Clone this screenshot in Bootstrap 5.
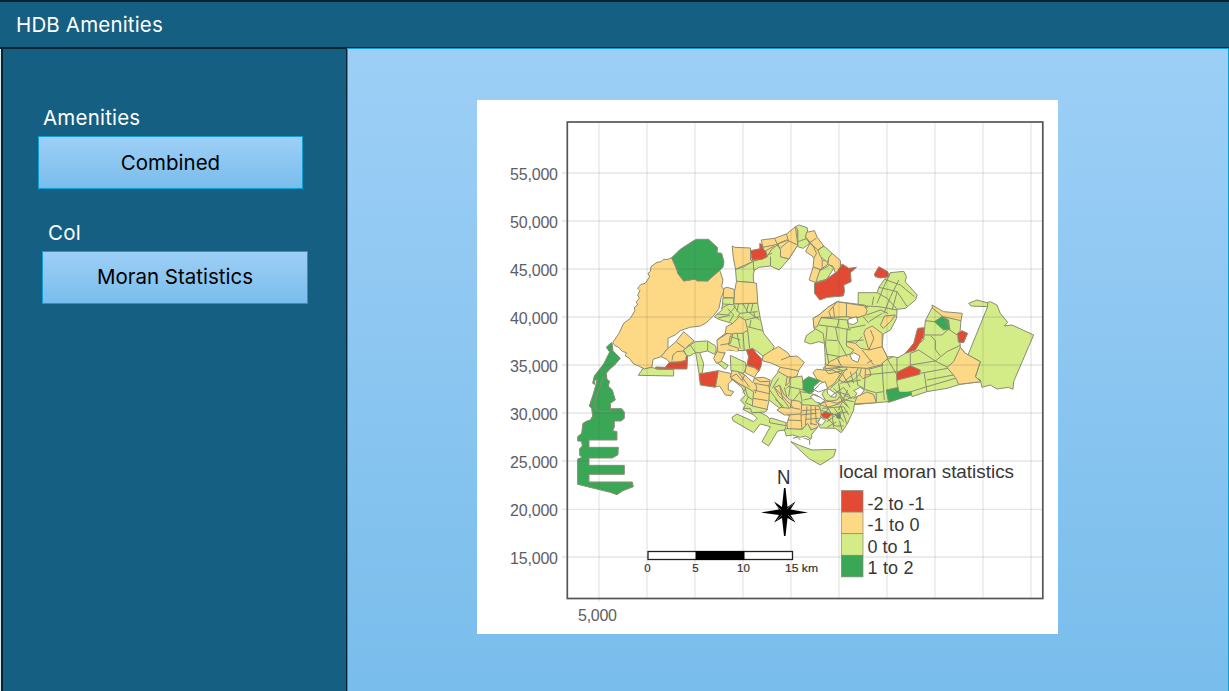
<!DOCTYPE html>
<html lang="en">
<head>
<meta charset="utf-8">
<meta name="viewport" content="width=device-width, initial-scale=1">
<title>HDB Amenities</title>
<link href="https://cdn.jsdelivr.net/npm/bootstrap@5.3.0/dist/css/bootstrap.min.css" rel="stylesheet">
<style>
body{font-family:Inter,"Liberation Sans",sans-serif;font-size:20.5px;letter-spacing:.08px;background:#156082}
.topbar{height:49px;background:#156082;border-top:2px solid #042433;border-bottom:2px solid #042433;padding:2px 0 0 16px}
.topbar span{letter-spacing:.16px}
.side{width:347px;background:#156082;border-left:1px solid #dfeaf0;border-right:1px solid #042433;padding:54px 0 0 37px;box-shadow:inset 2px 0 #042433}
.side label{line-height:30px;padding-left:5px;letter-spacing:.2px}
.pick{width:265px;height:53px;margin-top:3px;color:#000;border:1px solid #0f9ed5;border-radius:0;background:linear-gradient(#9dcff6,#79bdec);font-size:20.5px;padding:2px 0 0}
.pick:hover{color:#000}
.second{padding-left:4px;margin-top:29px}
.second label{padding-left:6px}
.second .pick{width:266px;padding:0}
.stage{border-top:1px solid #0f9ed5;border-left:1px solid #0f9ed5;border-right:1px solid #0f9ed5;margin-top:-1px;background:linear-gradient(#9dcff6,#79bdec);padding:51px 0 0 129px}
.plot{width:581px;height:534px;background:#fff;letter-spacing:0}
.plot svg{display:block;font-family:"Liberation Sans",Arial,sans-serif}
.zones path{stroke:#8c8c72;stroke-width:1;vector-effect:non-scaling-stroke;stroke-linejoin:round}
.r{fill:#e34a33}.o{fill:#fdd985}.l{fill:#d3ec87}.g{fill:#3aa757}.w{fill:#fff}.n{fill:none}
</style>
</head>
<body class="vh-100 overflow-hidden d-flex flex-column">
<header class="topbar d-flex align-items-center text-white flex-shrink-0"><span>HDB Amenities</span></header>
<div class="d-flex flex-grow-1">
<aside class="side text-white flex-shrink-0">
  <div>
    <label class="d-block">Amenities</label>
    <button class="btn pick d-block" type="button">Combined</button>
  </div>
  <div class="second">
    <label class="d-block">Col</label>
    <button class="btn pick d-block" type="button">Moran Statistics</button>
  </div>
</aside>
<main class="stage flex-grow-1">
<div class="plot">
<svg width="581" height="534" viewBox="477 100 581 534">
<g class="zones">
<!-- western islands -->
<g transform="translate(570.300 340) scale(.33333)">
<path class="g" d="M118 12L125 8 128 32 150 55 133 75 118 88 108 100 110 118 118 124 114 138 126 150 135 180 120 190 121 206 154 206 162 216 162 235 152 243 132 243 132 262 127 272 140 275 140 300 56 300 56 322 144 322 143 344 126 354 56 354 56 376 162 376 162 403 56 403 56 426 186 426 189 440 158 452 140 464 120 457 22 433 22 357 36 352 28 346 28 326 36 318 34 304 22 303 22 290 34 280 38 250 50 243 60 240 67 228 64 205 57 198 68 165 78 130 80 118 73 122 74 133 67 130 72 108 100 72 118 36 108 22Z"/>
<path class="n" d="M100 108L88 140 70 198 80 210 96 215 121 214 121 206"/>
</g>
<!-- north west -->
<g transform="translate(600.300 230) scale(.33333)">
<path class="l" d="M130 413L158 413 172 418 220 418 220 438 114 436 122 424Z"/>
<path class="o" d="M37 338L44 347 55 352 66 364 78 368 75 378 86 384 100 402 115 408 132 417 155 411 158 388 182 380 203 355 203 325 226 314 240 302 252 298 268 292 300 288 318 278 340 257 356 235 362 205 372 180 364 170 368 150 358 120 322 153 280 148 250 153 232 125 214 83 203 88 190 88 182 95 170 97 152 110 150 125 143 130 148 140 135 160 122 163 112 175 119 182 112 195 117 205 108 215 112 225 102 232 104 242 90 265 70 280 56 310Z"/>
<path class="g" d="M214 83L240 58 275 35 288 28 325 28 352 53 350 68 364 70 371 95 368 112 322 153 290 153 286 147 250 153 232 130 230 118Z"/>
<path class="o" d="M182 380L203 355 226 336 250 305 282 333 262 348 250 365 262 380 255 392 230 396 207 397 200 388Z"/>
<path class="r" d="M166 411L195 412 207 397 240 396 257 391 257 380 262 378 260 417 195 417 166 416Z"/>
<path class="n" d="M228 336L258 358M215 392L218 375 230 365 255 362"/>
<path class="l" d="M250 360L270 345 285 335 322 333 346 348 348 360 343 373 322 363 298 368 310 400 306 430 296 430 290 390 286 368 268 378 258 376Z"/>
<path class="n" d="M322 335V363M270 345L286 368 298 368"/>
</g>
<!-- north -->
<g transform="translate(700.500 220) scale(.33333)">
<path class="o" d="M95 78L103 82 150 84 150 120 158 124 105 148 98 110Z"/>
<path class="l" d="M105 148L130 140 158 124 164 142 158 165 160 188 108 184Z"/>
<path class="o" d="M108 184L160 188 168 190 172 250 135 250 100 252 102 215Z"/>
<path class="o" d="M70 205L80 202 101 208 101 234 68 232Z"/>
<path class="o" d="M182 60L222 55 258 42 285 20 292 28 292 75 265 117 240 112 215 110 195 112 188 84Z"/>
<path class="l" d="M158 124L198 112 212 90 230 75 240 88 240 110 265 117 236 150 210 138 175 142 160 152Z"/>
<path class="o" d="M232 72L258 60 292 75 265 117 240 110 240 88Z"/>
<path class="r" d="M150 92L178 86 178 70 185 75 188 88 196 93 200 110 185 118 155 121Z"/>
<path class="n" d="M186 82L222 75 258 62 M222 55L232 75M258 42L264 64 240 84M285 22L292 75M210 110V138M196 92L222 78M200 105L215 100"/>
<path class="l" d="M285 20L296 15 320 23 322 40 315 50 328 70 308 85 292 80 292 30Z"/>
<path class="o" d="M318 37L342 32 350 52 370 78 358 90 365 122 384 122 380 135 358 150 360 170 346 188 326 180 338 140 340 115 335 108 315 95 328 70 315 52Z"/>
<path class="l" d="M370 78L395 100 385 122 378 125 360 110 352 90Z"/>
<path class="o" d="M385 112L395 100 420 122 420 150 405 160 397 138 382 134Z"/>
<path class="l" d="M358 152L388 135 400 145 378 178 346 186Z"/>
<path class="n" d="M292 65L320 55M325 70L348 54M328 70L352 90 370 78M338 78L348 100 340 115M338 140L362 150M365 122L365 145M316 52L344 84"/>
</g>
<!-- west -->
<g transform="translate(700.300 330) scale(.33333)">
<path class="l" d="M68 -96L100 -96 100 -78 172 -80 180 -35 190 10 222 50 215 65 188 78 165 60 138 60 128 62 90 60 75 10 95 -20 55 -32 42 -40 65 -60Z"/>
<path class="o" d="M95 -18L118 -40 135 -30 142 0 128 10 100 10 90 18 85 45 115 55 112 66 85 60 72 68 50 95 42 85 52 60 50 30 75 10 78 -10Z"/>
<path class="w" d="M72 62L85 62 128 66 142 70 142 95 90 76Z" style="stroke:none"/>
<path class="n" d="M68 -78L100 -76 106 -70 82 -45 50 -48M82 -64L100 -45 88 -25M100 -72L118 -50 172 -55M115 -78L110 -55M128 -78L142 -55 178 -30M145 -79L138 -55M158 -79L152 -55M135 -30L178 -40M142 -10L188 2M142 0L148 55M160 -55L165 -35M110 10L120 55M128 8L132 60M92 20L120 30M50 30L82 10M75 10L98 12 90 40 60 45M54 -36L90 -45M62 -65L88 -78M120 -50L110 -38M148 -8L152 -30"/>
<path class="l" d="M72 68L62 92 84 106 75 118 50 98 48 92Z"/>
<path class="l" d="M90 76L135 97 138 112 130 130 92 122Z"/>
<path class="o" d="M188 78L215 60 235 50 262 68 270 80 290 78 312 97 296 120 290 138 272 145 235 132 232 124 240 112 215 100 186 92Z"/>
<path class="n" d="M242 90L272 78M240 112L295 122"/>
<path class="r" d="M138 60L158 55 168 70 185 88 182 110 175 125 162 112 140 105 145 80Z"/>
<path class="o" d="M50 65L74 70 62 95 48 100 40 85Z"/>
<path class="o" d="M138 106L164 114 175 122 162 142 134 128Z"/>
<path class="o" d="M53 122L90 130 98 148 84 162 84 180 100 185 92 197 75 195 58 168 45 170Z"/>
<path class="r" d="M-4 132L53 122 53 130 45 172 0 165Z"/>
<path class="l" d="M95 262L110 252 160 275 170 265 160 255 128 238 135 228 165 240 200 258 215 275 258 285 255 300 232 303 205 348 185 335 210 290 180 282 160 308 98 272Z"/>
<path class="l" d="M208 268L212 264 258 278 256 287 208 278Z"/>
</g>
<!-- south and centre -->
<g transform="translate(710.300 300) scale(.33333)">
<path class="l" d="M62 236L85 250 108 262 132 270 132 312 172 328 165 336 125 338 120 325 100 325 105 315 90 300 105 287 95 262Z"/>
<path class="o" d="M65 212L82 214 104 225 128 248 132 234 160 232 180 240 176 258 180 285 170 328 126 318 128 296 130 275 108 262 85 250 60 232Z"/>
<path class="n" d="M60 232L78 222 98 245M82 214L118 262M104 225L95 240M104 262L112 290 128 300M132 250L178 258M130 270L180 282M132 248L140 262 135 280M128 295L172 302M108 262L98 278M115 290L105 308 128 318M132 234L150 245 178 244"/>
<path class="l" d="M205 215L238 234 275 228 282 270 292 278 318 285 334 296 325 318 272 324 240 340 205 322 176 300 178 262 186 238Z"/>
<path class="o" d="M230 232L242 230 236 248 226 258Z"/>
<path class="o" d="M192 262L208 256 222 285 240 300 268 304 275 314 325 318 334 334 330 372 318 385 305 390 290 372 276 388 232 388 230 372 238 345 222 345 200 330 212 322 238 325 220 300 205 288Z"/>
<path class="l" d="M222 388L232 386 276 388 292 370 302 390 322 382 305 402 302 418 286 408 270 412 246 405 228 408Z"/>
<path class="n" d="M192 262L248 322M208 256L218 300M178 270L200 300 215 322M222 262L230 292M240 258L235 290M235 260L282 270M238 234L240 255 228 265M250 300L270 275 290 278M275 300L272 345 275 388M232 345L270 342M240 322L270 328M245 300L240 322M232 360L272 362M290 320L285 375M272 345L318 340M302 318V375M315 320L318 370M285 358L325 355M275 332L328 328M300 370L320 375M268 268L275 300M280 300L315 292M205 235L186 265M195 298L220 320"/>
<path class="l" d="M340 202L400 180 480 170 548 170 590 178 640 140 640 270 590 288 535 305 498 308 432 314 430 330 412 370 393 398 375 385 330 384 322 368 334 345 328 320 345 300 335 282 345 268 342 245Z"/>
<path class="o" d="M308 218L318 208 342 210 360 212 372 204 398 212 382 235 372 250 350 266 344 250 320 238Z"/>
<path class="o" d="M345 190L360 180 400 162 455 168 500 160 518 196 482 206 466 200 470 180 446 200 438 215 400 246 385 240 412 200 345 206Z"/>
<path class="o" d="M432 312L440 290 470 276 490 284 498 308ZM454 202L478 208 482 226 458 236 448 224ZM325 312L350 305 380 300 388 290 396 302 384 312 352 322Z"/>
<path class="g" d="M278 242L295 230 330 242 310 260 310 275 295 280 278 270Z"/>
<path class="w" d="M300 290L310 284 330 292 344 302 332 310 316 306Z"/>
<path class="w" d="M330 250L345 245 352 266 325 276 312 270Z"/>
<path class="w" d="M350 268L358 268 378 282 376 292 362 290 352 280Z"/>
<path class="w" d="M430 296L440 280 430 272 450 262 462 270 452 284 438 290ZM322 368L332 352 346 362 334 376Z"/>
<path class="r" d="M332 342L345 336 365 343 352 356 338 353Z"/>
<path class="g" d="M378 346L390 342 390 356 380 354Z"/>
<path class="n" d="M342 206L355 222 412 208M355 205L400 225M345 188L400 192M378 175L382 200M405 165L410 200M430 168L428 205M455 168L462 195M390 250L430 240 448 222M398 225L420 262M345 300L380 310 430 290M360 290L400 262 420 290M385 250L392 290 412 318M345 310L365 345 412 335M370 265L405 300 430 305M388 240L360 265M412 270L385 330M335 325L400 320 415 345M330 330L378 345M350 365L398 330M352 356L375 378 400 378M365 340L370 382M392 320L410 372M372 325L400 365M400 285L425 295M392 300L418 325M380 275L415 285M466 200L462 268 496 278M465 225L560 215M515 195L522 300M560 225L565 268M548 170L532 178 560 225M520 275L498 278V308M438 215L442 255 462 266M405 248L452 240M420 215L430 250M350 382L378 366M388 362L395 392M355 320L348 336"/>
<path class="g" d="M528 270L565 262 575 278 602 275 602 285 535 307Z"/>
<path class="r" d="M560 222L575 215 605 198 615 206 635 210 635 225 560 242Z"/>
<path class="l" d="M242 425L265 435 305 450 377 448 370 470 330 495 295 475Z"/>
<path class="n" d="M248 415L262 411 270 420M280 414L298 420 298 434"/>
</g>
<!-- north east -->
<g transform="translate(800.500 250) scale(.33333)">
<path class="l" d="M173 128L230 128 235 112 252 88 270 68 310 64 318 80 314 95 350 135 345 150 315 175 290 178 288 205 270 240 248 252 245 290 262 325 240 345 75 345 72 280 55 275 30 282 12 275 18 256 42 240 38 205 55 195 85 170 110 155 192 165 202 172 173 168Z"/>
<path class="o" d="M38 205L55 195 85 170 110 155 192 168 200 182 195 195 165 205 140 200 62 203 50 230 40 232Z"/>
<path class="o" d="M195 238L215 228 245 250 245 290 262 325 240 345 200 355 150 352 120 350 80 346 88 335 118 320 150 312 160 300 138 288 138 275 165 280 180 295 205 300 190 250Z"/>
<path class="o" d="M240 225L252 198 285 195 270 215 248 235Z"/>
<path class="w" d="M142 208L168 200 172 215 158 224 143 220Z"/>
<path class="w" d="M148 315L160 308 178 318 172 337 155 330Z"/>
<path class="r" d="M42 100L75 90 95 75 110 65 125 42 145 55 168 52 150 68 152 95 130 105 132 125 128 138 80 142 58 150 42 130Z"/>
<path class="r" d="M222 72L235 50 262 65 265 80 240 84 224 80Z"/>
<path class="n" d="M252 88L300 105 342 140M235 112L290 125 320 170M230 128L260 145 290 178M270 68L250 110 230 160M295 90L270 140 250 190M290 125L275 180M215 165L220 140M195 168L235 170 290 180M198 195L240 180 262 190M205 215L245 190M188 200L205 220M62 203L140 210 145 235 195 225M55 225L110 232 150 240M98 170L102 200M110 155L85 185 92 205M138 160V200M42 235L68 250 72 280M80 230L75 285 85 340M105 230L112 270 140 320M140 235L138 275M115 210L110 232M80 270L110 272M138 275L190 270M165 280L185 260M210 240L220 265 205 300M205 300L245 290M185 300L220 345M75 312L118 320M110 325L125 352M200 340L215 330"/>
</g>
<!-- east -->
<g transform="translate(900.300 290) scale(.33333)">
<path class="l" d="M75 92L97 50 125 65 182 92 178 140 180 172 195 190 240 215 240 275 180 283 140 295 80 305 35 320 32 305 -2 312 -10 280 -10 205 15 190 70 150Z"/>
<path class="o" d="M95 45L130 65 186 70 182 92 128 80 97 55Z"/>
<path class="l" d="M205 40L230 30 260 38 270 35 290 45 300 70 322 97 312 108 335 105 400 135 385 170 355 240 340 275 338 298 325 292 290 297 270 285 245 292 240 270 225 262 240 215 203 195 262 50 212 48Z"/>
<path class="o" d="M180 172L195 190 240 215 225 260 242 275 175 283 165 262 140 232 160 215Z"/>
<path class="r" d="M172 130L185 122 202 130 190 158 174 156Z"/>
<path class="g" d="M102 95L125 80 145 90 148 118 130 120Z"/>
<path class="r" d="M52 115L72 113 70 140 45 180 15 190 40 160Z"/>
<path class="r" d="M-10 247L30 227 60 240 58 253 0 268 -10 271"/>
<path class="g" d="M-12 305L32 305 34 314 -8 324" style="stroke:none"/>
<path class="n" d="M75 92L102 95M72 135H125L145 118 178 140M92 138L105 152V178L120 198M30 190L55 180 105 213 140 185 180 166M30 225L105 213 142 232M30 190V225M60 250L142 235M72 250L80 305M80 270L160 255M80 290L165 265M262 38V50M128 80L150 118M32 305L80 290"/>
</g>
</g>
<!-- graticule -->
<g stroke="#5a5a5a" stroke-opacity=".15" stroke-width="1.3" fill="none">
<path d="M599 122V602M647 122V598M695 122V598M743 122V598M791 122V598M839 122V598M887 122V598M935 122V598M983 122V598M1031 122V598"/>
<path d="M562 173H1043M562 221H1043M562 269H1043M562 317H1043M562 365H1043M562 413H1043M562 461H1043M562 509.300H1043M562 557H1043"/>
</g>
<rect x="567.300" y="122" width="475.500" height="476.500" fill="none" stroke="#555" stroke-width="1.7"/>
<g fill="#5d5d64" font-size="16" text-anchor="end">
<text x="558" y="179.500" textLength="48">55,000</text><text x="558" y="227.500" textLength="48">50,000</text><text x="558" y="275.500" textLength="48">45,000</text><text x="558" y="323.500" textLength="48">40,000</text><text x="558" y="371.500" textLength="48">35,000</text><text x="558" y="419.500" textLength="48">30,000</text><text x="558" y="467.500" textLength="48">25,000</text><text x="558" y="515.500" textLength="48">20,000</text><text x="558" y="563.500" textLength="48">15,000</text><text x="617" y="620.500" textLength="39">5,000</text>
</g>
<!-- compass -->
<text x="777" y="484" font-size="20" textLength="13.500" lengthAdjust="spacingAndGlyphs" fill="#333">N</text>
<path d="M784 488L785.500 488 787.500 507 795.500 501.500 790.500 509.500 808 512.500 790.500 515 795.500 522.500 787.500 518 785.500 536 784 536 782 518 774 522.500 779 515 761 512.500 779 509.500 774 501.500 782 507Z" fill="#000"/>
<path d="M787 509L793 504M788 515L793 520M782 515L777 520M781 510L776 505" stroke="#aaa" stroke-width=".6"/>
<!-- scale bar -->
<rect x="648" y="551.500" width="144.500" height="8" fill="#fff" stroke="#222" stroke-width="1.3"/>
<rect x="695.500" y="551" width="49" height="9" fill="#000"/>
<g font-size="11.500" fill="#333" text-anchor="middle" stroke="#333" stroke-width=".2"><text x="647.500" y="572">0</text><text x="695.500" y="572">5</text><text x="743.500" y="572">10</text><text x="801.500" y="572" textLength="33" lengthAdjust="spacingAndGlyphs">15 km</text></g>
<!-- legend -->
<g fill="#383838"><text x="839" y="477.500" font-size="18.500" textLength="175" lengthAdjust="spacingAndGlyphs">local moran statistics</text>
<g font-size="18"><text x="867.500" y="509.500" textLength="57">-2 to -1</text><text x="867.500" y="531" textLength="52">-1 to 0</text><text x="867.500" y="552.500" textLength="45">0 to 1</text><text x="867.500" y="574" textLength="46">1 to 2</text></g></g>
<g stroke="#888" stroke-width=".7"><rect class="r" x="841.300" y="490.500" width="21.700" height="21.600"/><rect class="o" x="841.300" y="512.100" width="21.700" height="21.600"/><rect class="l" x="841.300" y="533.700" width="21.700" height="21.600"/><rect class="g" x="841.300" y="555.300" width="21.700" height="21.600"/></g>
</svg>
</div>
</main>
</div>
<script src="https://cdn.jsdelivr.net/npm/bootstrap@5.3.0/dist/js/bootstrap.bundle.min.js"></script>
</body>
</html>
